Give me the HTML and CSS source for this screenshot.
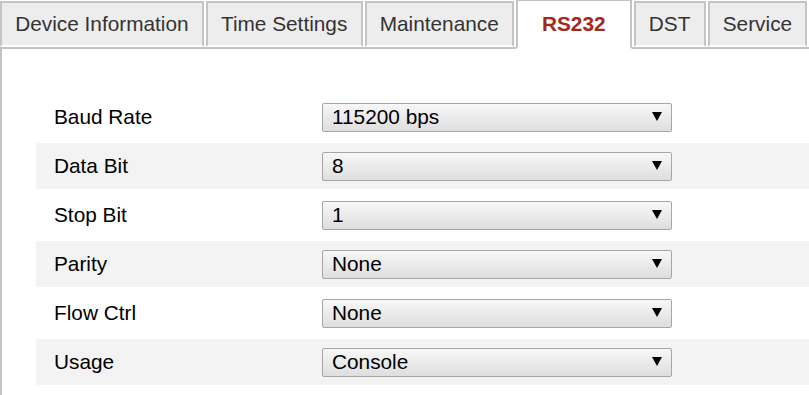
FILE: index.html
```html
<!DOCTYPE html>
<html lang="en">
<head>
    <meta charset="UTF-8">
    <meta name="viewport" content="width=device-width, initial-scale=1.0">
    <title>RS232</title>
    <link rel="stylesheet" href="styles.css">
</head>
<body>
    <ul class="tabs">
        <li class="tab">Device Information</li>
        <li class="tab">Time Settings</li>
        <li class="tab">Maintenance</li>
        <li class="tab active">RS232</li>
        <li class="tab">DST</li>
        <li class="tab">Service</li>
    </ul>
    <div class="panel">
        <div class="row">
            <div class="label">Baud Rate</div>
            <div class="select"><span>115200 bps</span><i class="arrow"></i></div>
        </div>
        <div class="row">
            <div class="label">Data Bit</div>
            <div class="select"><span>8</span><i class="arrow"></i></div>
        </div>
        <div class="row">
            <div class="label">Stop Bit</div>
            <div class="select"><span>1</span><i class="arrow"></i></div>
        </div>
        <div class="row">
            <div class="label">Parity</div>
            <div class="select"><span>None</span><i class="arrow"></i></div>
        </div>
        <div class="row">
            <div class="label">Flow Ctrl</div>
            <div class="select"><span>None</span><i class="arrow"></i></div>
        </div>
        <div class="row">
            <div class="label">Usage</div>
            <div class="select"><span>Console</span><i class="arrow"></i></div>
        </div>
    </div>
</body>
</html>
```
FILE: styles.css
```css
* {
    margin: 0;
    padding: 0;
    box-sizing: border-box;
}
body {
    font-family: "Liberation Sans", Arial, sans-serif;
    font-size: 20.8px;
    background: #fff;
    color: #000;
    width: 840px;
    overflow: hidden;
}
.tabs {
    list-style: none;
    display: flex;
    align-items: flex-start;
    height: 47px;
}
.tab {
    height: 46px;
    margin-top: 1px;
    margin-right: 2px;
    padding: 0 13.2px;
    border: 2px solid #c4c4c4;
    border-bottom-color: #fff;
    background: #ededed;
    color: #333;
    display: flex;
    align-items: center;
    white-space: nowrap;
}
.tab.active {
    position: relative;
    z-index: 1;
    height: 50px;
    margin-top: -1px;
    background: #fff;
    color: #a3281a;
    font-weight: bold;
    padding: 0 24px;
}
.panel {
    border-top: 2px solid #c4c4c4;
    border-left: 2px solid #c4c4c4;
    padding: 45px 0 20px 34px;
}
.row {
    display: flex;
    align-items: center;
    height: 46px;
    margin-bottom: 3px;
    padding-left: 18px;
}
.row:nth-child(even) {
    background: #f3f3f3;
}
.label {
    width: 268px;
}
.select {
    width: 350px;
    height: 29px;
    border: 1px solid #a6a6a6;
    border-radius: 2px;
    background: linear-gradient(#f7f7f7, #dedede);
    display: flex;
    align-items: center;
    justify-content: space-between;
    padding: 0 9px 0 9px;
}
.arrow {
    width: 0;
    height: 0;
    border-left: 5px solid transparent;
    border-right: 5px solid transparent;
    border-top: 9px solid #000;
    margin-top: -2px;
}
```
